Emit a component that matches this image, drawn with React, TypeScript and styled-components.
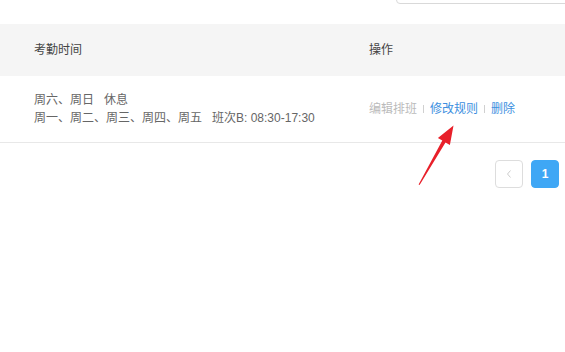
import React from "react";
import styled, { createGlobalStyle } from "styled-components";

type Rule = {
  rest: string;
  restLabel: string;
  work: string;
  shift: string;
};

const rules: Rule[] = [
  {
    rest: "周六、周日",
    restLabel: "休息",
    work: "周一、周二、周三、周四、周五",
    shift: "班次B: 08:30-17:30",
  },
];

const GlobalStyle = createGlobalStyle`
  html, body {
    margin: 0;
    padding: 0;
    background: #ffffff;
  }
  body {
    font-family: "Liberation Sans", "Noto Sans CJK SC", sans-serif;
  }
`;

class App extends React.Component {
  render() {
    return (
      <Page>
        <GlobalStyle />
        <Toolbar>
          <SearchBox />
        </Toolbar>
        <Table>
          <HeadRow>
            <HeadCell first>考勤时间</HeadCell>
            <HeadCell>操作</HeadCell>
          </HeadRow>
          {rules.map((r, i) => (
            <BodyRow key={i}>
              <Cell first>
                <Line>
                  {r.rest}
                  <Gap>{r.restLabel}</Gap>
                </Line>
                <Line>
                  {r.work}
                  <Gap>{r.shift}</Gap>
                </Line>
              </Cell>
              <Cell>
                <Actions>
                  <Action disabled>编辑排班</Action>
                  <Sep />
                  <Action>修改规则</Action>
                  <Sep />
                  <Action>删除</Action>
                </Actions>
              </Cell>
            </BodyRow>
          ))}
        </Table>
        <Pager>
          <PageBtn>
            <svg width="8" height="10" viewBox="0 0 8 10">
              <path d="M5.5 1.5 L2.5 5 L5.5 8.5" fill="none" stroke="#cccccc" strokeWidth="1" />
            </svg>
          </PageBtn>
          <PageBtn active>1</PageBtn>
        </Pager>
        <Arrow viewBox="0 0 565 352" width="565" height="352">
          <polygon
            points="418.6,184.5 442.3,140.6 437.9,138.0 453.5,125.5 449.9,145.0 445.5,142.4 419.6,185.0"
            fill="#e8202a"
          />
        </Arrow>
      </Page>
    );
  }
}

const Page = styled.div`
  position: relative;
  width: 565px;
  height: 352px;
  overflow: hidden;
  background: #ffffff;
  color: #666666;
  font-size: 12px;
`;

const Toolbar = styled.div`
  height: 24px;
  display: flex;
  justify-content: flex-end;
  align-items: flex-end;
  overflow: hidden;
`;

const SearchBox = styled.div`
  width: 200px;
  height: 32px;
  margin-bottom: 20px;
  margin-right: -31px;
  border: 1px solid #d9d9d9;
  border-radius: 4px;
  box-sizing: border-box;
  flex-shrink: 0;
`;

const Table = styled.div`
  display: flex;
  flex-direction: column;
`;

const HeadRow = styled.div`
  display: grid;
  grid-template-columns: 369px 1fr;
  height: 52px;
  align-items: center;
  background: #f5f5f5;
`;

const HeadCell = styled.div<{ first?: boolean }>`
  padding-left: ${(p) => (p.first ? "34px" : "0")};
  color: #444444;
  line-height: 18px;
`;

const BodyRow = styled.div`
  display: grid;
  grid-template-columns: 369px 1fr;
  align-items: center;
  padding: 15px 0;
  border-bottom: 1px solid #e8e8e8;
`;

const Cell = styled.div<{ first?: boolean }>`
  padding-left: ${(p) => (p.first ? "34px" : "0")};
`;

const Line = styled.div`
  line-height: 18px;
  color: #666666;
  white-space: nowrap;
`;

const Gap = styled.span`
  margin-left: 10px;
`;

const Actions = styled.div`
  display: flex;
  align-items: center;
  line-height: 18px;
`;

const Action = styled.span<{ disabled?: boolean }>`
  color: ${(p) => (p.disabled ? "#bbbbbb" : "#3d8fe0")};
  cursor: pointer;
`;

const Sep = styled.span`
  width: 1px;
  height: 8px;
  background: #d0d0d0;
  margin: 0 6px;
`;

const Pager = styled.div`
  display: flex;
  justify-content: flex-end;
  gap: 8px;
  margin-top: 17px;
  padding-right: 6px;
`;

const PageBtn = styled.div<{ active?: boolean }>`
  width: 28px;
  height: 28px;
  box-sizing: border-box;
  display: flex;
  align-items: center;
  justify-content: center;
  border-radius: 4px;
  border: 1px solid ${(p) => (p.active ? "#3fa7f5" : "#dddddd")};
  background: ${(p) => (p.active ? "#3fa7f5" : "#ffffff")};
  color: #ffffff;
  font-weight: bold;
  font-size: 12px;
`;

const Arrow = styled.svg`
  position: absolute;
  left: 0;
  top: 0;
  pointer-events: none;
`;

export default App;
